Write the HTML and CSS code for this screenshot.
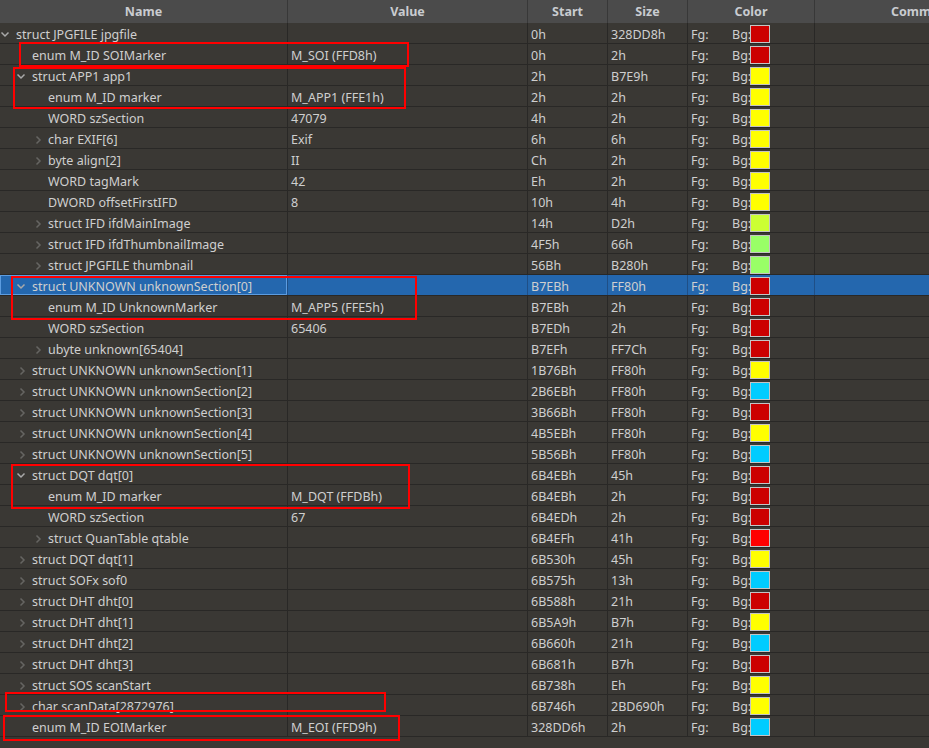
FILE: index.html
```html
<!DOCTYPE html>
<html>
<head>
<meta charset="utf-8">
<link rel="stylesheet" href="styles.css">
</head>
<body>
<div class="tree">
  <div class="hdr">
    <div class="h name">Name</div><div class="h val">Value</div><div class="h start">Start</div><div class="h size">Size</div><div class="h color">Color</div><div class="h cmt">Comm</div>
  </div>

  <div class="row"><div class="c name l0"><span class="tw open"><svg viewBox="0 0 10 10"><path d="M1.5 3.5 L5 7 L8.5 3.5"/></svg></span>struct JPGFILE jpgfile</div><div class="c val"></div><div class="c start">0h</div><div class="c size">328DD8h</div><div class="c color"><span class="fg">Fg:</span><span class="bg">Bg:</span><i class="sw red"></i></div><div class="c cmt"></div></div>
  <div class="row"><div class="c name l1"><span class="tw"></span>enum M_ID SOIMarker</div><div class="c val">M_SOI (FFD8h)</div><div class="c start">0h</div><div class="c size">2h</div><div class="c color"><span class="fg">Fg:</span><span class="bg">Bg:</span><i class="sw red"></i></div><div class="c cmt"></div></div>
  <div class="row"><div class="c name l1"><span class="tw open"><svg viewBox="0 0 10 10"><path d="M1.5 3.5 L5 7 L8.5 3.5"/></svg></span>struct APP1 app1</div><div class="c val"></div><div class="c start">2h</div><div class="c size">B7E9h</div><div class="c color"><span class="fg">Fg:</span><span class="bg">Bg:</span><i class="sw yel"></i></div><div class="c cmt"></div></div>
  <div class="row"><div class="c name l2"><span class="tw"></span>enum M_ID marker</div><div class="c val">M_APP1 (FFE1h)</div><div class="c start">2h</div><div class="c size">2h</div><div class="c color"><span class="fg">Fg:</span><span class="bg">Bg:</span><i class="sw yel"></i></div><div class="c cmt"></div></div>
  <div class="row"><div class="c name l2"><span class="tw"></span>WORD szSection</div><div class="c val">47079</div><div class="c start">4h</div><div class="c size">2h</div><div class="c color"><span class="fg">Fg:</span><span class="bg">Bg:</span><i class="sw yel"></i></div><div class="c cmt"></div></div>
  <div class="row"><div class="c name l2"><span class="tw shut"><svg viewBox="0 0 10 10"><path d="M3.5 1.5 L7 5 L3.5 8.5"/></svg></span>char EXIF[6]</div><div class="c val">Exif</div><div class="c start">6h</div><div class="c size">6h</div><div class="c color"><span class="fg">Fg:</span><span class="bg">Bg:</span><i class="sw yel"></i></div><div class="c cmt"></div></div>
  <div class="row"><div class="c name l2"><span class="tw shut"><svg viewBox="0 0 10 10"><path d="M3.5 1.5 L7 5 L3.5 8.5"/></svg></span>byte align[2]</div><div class="c val">II</div><div class="c start">Ch</div><div class="c size">2h</div><div class="c color"><span class="fg">Fg:</span><span class="bg">Bg:</span><i class="sw yel"></i></div><div class="c cmt"></div></div>
  <div class="row"><div class="c name l2"><span class="tw"></span>WORD tagMark</div><div class="c val">42</div><div class="c start">Eh</div><div class="c size">2h</div><div class="c color"><span class="fg">Fg:</span><span class="bg">Bg:</span><i class="sw yel"></i></div><div class="c cmt"></div></div>
  <div class="row"><div class="c name l2"><span class="tw"></span>DWORD offsetFirstIFD</div><div class="c val">8</div><div class="c start">10h</div><div class="c size">4h</div><div class="c color"><span class="fg">Fg:</span><span class="bg">Bg:</span><i class="sw yel"></i></div><div class="c cmt"></div></div>
  <div class="row"><div class="c name l2"><span class="tw shut"><svg viewBox="0 0 10 10"><path d="M3.5 1.5 L7 5 L3.5 8.5"/></svg></span>struct IFD ifdMainImage</div><div class="c val"></div><div class="c start">14h</div><div class="c size">D2h</div><div class="c color"><span class="fg">Fg:</span><span class="bg">Bg:</span><i class="sw lime"></i></div><div class="c cmt"></div></div>
  <div class="row"><div class="c name l2"><span class="tw shut"><svg viewBox="0 0 10 10"><path d="M3.5 1.5 L7 5 L3.5 8.5"/></svg></span>struct IFD ifdThumbnailImage</div><div class="c val"></div><div class="c start">4F5h</div><div class="c size">66h</div><div class="c color"><span class="fg">Fg:</span><span class="bg">Bg:</span><i class="sw grn"></i></div><div class="c cmt"></div></div>
  <div class="row"><div class="c name l2"><span class="tw shut"><svg viewBox="0 0 10 10"><path d="M3.5 1.5 L7 5 L3.5 8.5"/></svg></span>struct JPGFILE thumbnail</div><div class="c val"></div><div class="c start">56Bh</div><div class="c size">B280h</div><div class="c color"><span class="fg">Fg:</span><span class="bg">Bg:</span><i class="sw grn"></i></div><div class="c cmt"></div></div>
  <div class="row sel"><div class="c name l1 focus"><span class="tw open"><svg viewBox="0 0 10 10"><path d="M1.5 3.5 L5 7 L8.5 3.5"/></svg></span>struct UNKNOWN unknownSection[0]</div><div class="c val"></div><div class="c start">B7EBh</div><div class="c size">FF80h</div><div class="c color"><span class="fg">Fg:</span><span class="bg">Bg:</span><i class="sw red"></i></div><div class="c cmt"></div></div>
  <div class="row"><div class="c name l2"><span class="tw"></span>enum M_ID UnknownMarker</div><div class="c val">M_APP5 (FFE5h)</div><div class="c start">B7EBh</div><div class="c size">2h</div><div class="c color"><span class="fg">Fg:</span><span class="bg">Bg:</span><i class="sw red"></i></div><div class="c cmt"></div></div>
  <div class="row"><div class="c name l2"><span class="tw"></span>WORD szSection</div><div class="c val">65406</div><div class="c start">B7EDh</div><div class="c size">2h</div><div class="c color"><span class="fg">Fg:</span><span class="bg">Bg:</span><i class="sw red"></i></div><div class="c cmt"></div></div>
  <div class="row"><div class="c name l2"><span class="tw shut"><svg viewBox="0 0 10 10"><path d="M3.5 1.5 L7 5 L3.5 8.5"/></svg></span>ubyte unknown[65404]</div><div class="c val"></div><div class="c start">B7EFh</div><div class="c size">FF7Ch</div><div class="c color"><span class="fg">Fg:</span><span class="bg">Bg:</span><i class="sw red"></i></div><div class="c cmt"></div></div>
  <div class="row"><div class="c name l1"><span class="tw shut"><svg viewBox="0 0 10 10"><path d="M3.5 1.5 L7 5 L3.5 8.5"/></svg></span>struct UNKNOWN unknownSection[1]</div><div class="c val"></div><div class="c start">1B76Bh</div><div class="c size">FF80h</div><div class="c color"><span class="fg">Fg:</span><span class="bg">Bg:</span><i class="sw yel"></i></div><div class="c cmt"></div></div>
  <div class="row"><div class="c name l1"><span class="tw shut"><svg viewBox="0 0 10 10"><path d="M3.5 1.5 L7 5 L3.5 8.5"/></svg></span>struct UNKNOWN unknownSection[2]</div><div class="c val"></div><div class="c start">2B6EBh</div><div class="c size">FF80h</div><div class="c color"><span class="fg">Fg:</span><span class="bg">Bg:</span><i class="sw cyan"></i></div><div class="c cmt"></div></div>
  <div class="row"><div class="c name l1"><span class="tw shut"><svg viewBox="0 0 10 10"><path d="M3.5 1.5 L7 5 L3.5 8.5"/></svg></span>struct UNKNOWN unknownSection[3]</div><div class="c val"></div><div class="c start">3B66Bh</div><div class="c size">FF80h</div><div class="c color"><span class="fg">Fg:</span><span class="bg">Bg:</span><i class="sw red"></i></div><div class="c cmt"></div></div>
  <div class="row"><div class="c name l1"><span class="tw shut"><svg viewBox="0 0 10 10"><path d="M3.5 1.5 L7 5 L3.5 8.5"/></svg></span>struct UNKNOWN unknownSection[4]</div><div class="c val"></div><div class="c start">4B5EBh</div><div class="c size">FF80h</div><div class="c color"><span class="fg">Fg:</span><span class="bg">Bg:</span><i class="sw yel"></i></div><div class="c cmt"></div></div>
  <div class="row"><div class="c name l1"><span class="tw shut"><svg viewBox="0 0 10 10"><path d="M3.5 1.5 L7 5 L3.5 8.5"/></svg></span>struct UNKNOWN unknownSection[5]</div><div class="c val"></div><div class="c start">5B56Bh</div><div class="c size">FF80h</div><div class="c color"><span class="fg">Fg:</span><span class="bg">Bg:</span><i class="sw cyan"></i></div><div class="c cmt"></div></div>
  <div class="row"><div class="c name l1"><span class="tw open"><svg viewBox="0 0 10 10"><path d="M1.5 3.5 L5 7 L8.5 3.5"/></svg></span>struct DQT dqt[0]</div><div class="c val"></div><div class="c start">6B4EBh</div><div class="c size">45h</div><div class="c color"><span class="fg">Fg:</span><span class="bg">Bg:</span><i class="sw red"></i></div><div class="c cmt"></div></div>
  <div class="row"><div class="c name l2"><span class="tw"></span>enum M_ID marker</div><div class="c val">M_DQT (FFDBh)</div><div class="c start">6B4EBh</div><div class="c size">2h</div><div class="c color"><span class="fg">Fg:</span><span class="bg">Bg:</span><i class="sw red"></i></div><div class="c cmt"></div></div>
  <div class="row"><div class="c name l2"><span class="tw"></span>WORD szSection</div><div class="c val">67</div><div class="c start">6B4EDh</div><div class="c size">2h</div><div class="c color"><span class="fg">Fg:</span><span class="bg">Bg:</span><i class="sw red"></i></div><div class="c cmt"></div></div>
  <div class="row"><div class="c name l2"><span class="tw shut"><svg viewBox="0 0 10 10"><path d="M3.5 1.5 L7 5 L3.5 8.5"/></svg></span>struct QuanTable qtable</div><div class="c val"></div><div class="c start">6B4EFh</div><div class="c size">41h</div><div class="c color"><span class="fg">Fg:</span><span class="bg">Bg:</span><i class="sw bred"></i></div><div class="c cmt"></div></div>
  <div class="row"><div class="c name l1"><span class="tw shut"><svg viewBox="0 0 10 10"><path d="M3.5 1.5 L7 5 L3.5 8.5"/></svg></span>struct DQT dqt[1]</div><div class="c val"></div><div class="c start">6B530h</div><div class="c size">45h</div><div class="c color"><span class="fg">Fg:</span><span class="bg">Bg:</span><i class="sw yel"></i></div><div class="c cmt"></div></div>
  <div class="row"><div class="c name l1"><span class="tw shut"><svg viewBox="0 0 10 10"><path d="M3.5 1.5 L7 5 L3.5 8.5"/></svg></span>struct SOFx sof0</div><div class="c val"></div><div class="c start">6B575h</div><div class="c size">13h</div><div class="c color"><span class="fg">Fg:</span><span class="bg">Bg:</span><i class="sw cyan"></i></div><div class="c cmt"></div></div>
  <div class="row"><div class="c name l1"><span class="tw shut"><svg viewBox="0 0 10 10"><path d="M3.5 1.5 L7 5 L3.5 8.5"/></svg></span>struct DHT dht[0]</div><div class="c val"></div><div class="c start">6B588h</div><div class="c size">21h</div><div class="c color"><span class="fg">Fg:</span><span class="bg">Bg:</span><i class="sw red"></i></div><div class="c cmt"></div></div>
  <div class="row"><div class="c name l1"><span class="tw shut"><svg viewBox="0 0 10 10"><path d="M3.5 1.5 L7 5 L3.5 8.5"/></svg></span>struct DHT dht[1]</div><div class="c val"></div><div class="c start">6B5A9h</div><div class="c size">B7h</div><div class="c color"><span class="fg">Fg:</span><span class="bg">Bg:</span><i class="sw yel"></i></div><div class="c cmt"></div></div>
  <div class="row"><div class="c name l1"><span class="tw shut"><svg viewBox="0 0 10 10"><path d="M3.5 1.5 L7 5 L3.5 8.5"/></svg></span>struct DHT dht[2]</div><div class="c val"></div><div class="c start">6B660h</div><div class="c size">21h</div><div class="c color"><span class="fg">Fg:</span><span class="bg">Bg:</span><i class="sw cyan"></i></div><div class="c cmt"></div></div>
  <div class="row"><div class="c name l1"><span class="tw shut"><svg viewBox="0 0 10 10"><path d="M3.5 1.5 L7 5 L3.5 8.5"/></svg></span>struct DHT dht[3]</div><div class="c val"></div><div class="c start">6B681h</div><div class="c size">B7h</div><div class="c color"><span class="fg">Fg:</span><span class="bg">Bg:</span><i class="sw red"></i></div><div class="c cmt"></div></div>
  <div class="row"><div class="c name l1"><span class="tw shut"><svg viewBox="0 0 10 10"><path d="M3.5 1.5 L7 5 L3.5 8.5"/></svg></span>struct SOS scanStart</div><div class="c val"></div><div class="c start">6B738h</div><div class="c size">Eh</div><div class="c color"><span class="fg">Fg:</span><span class="bg">Bg:</span><i class="sw yel"></i></div><div class="c cmt"></div></div>
  <div class="row"><div class="c name l1"><span class="tw shut"><svg viewBox="0 0 10 10"><path d="M3.5 1.5 L7 5 L3.5 8.5"/></svg></span>char scanData[2872976]</div><div class="c val"></div><div class="c start">6B746h</div><div class="c size">2BD690h</div><div class="c color"><span class="fg">Fg:</span><span class="bg">Bg:</span><i class="sw yel"></i></div><div class="c cmt"></div></div>
  <div class="row"><div class="c name l1"><span class="tw"></span>enum M_ID EOIMarker</div><div class="c val">M_EOI (FFD9h)</div><div class="c start">328DD6h</div><div class="c size">2h</div><div class="c color"><span class="fg">Fg:</span><span class="bg">Bg:</span><i class="sw cyan"></i></div><div class="c cmt"></div></div>

  <div class="mark m1"></div>
  <div class="mark m2"></div>
  <div class="mark m3"></div>
  <div class="mark m4"></div>
  <div class="mark m5"></div>
  <div class="mark m6"></div>
</div>
</body>
</html>
```

FILE: styles.css
```css
html, body {
  margin: 0;
  padding: 0;
  background: #3a3834;
}
body {
  width: 929px;
  height: 748px;
  overflow: hidden;
  font-family: "Noto Sans", "Open Sans", sans-serif;
  font-size: 12.5px;
  color: #cfcfcf;
}
.tree {
  position: relative;
  width: 929px;
  height: 748px;
  background: #3a3834;
}
.hdr {
  display: flex;
  height: 23px;
  background: #4b4b4b;
}
.h {
  flex: none;
  box-sizing: border-box;
  border-right: 1px solid #383838;
  font-weight: bold;
  color: #c9ccd0;
  text-align: center;
  line-height: 23px;
  white-space: nowrap;
  overflow: hidden;
}
.row {
  display: flex;
  height: 21px;
  box-sizing: border-box;
  border-bottom: 1px solid #292826;
}
.c {
  flex: none;
  box-sizing: border-box;
  height: 20px;
  border-right: 1px solid #292826;
  line-height: 17px;
  padding-top: 3px;
  padding-left: 3px;
  white-space: nowrap;
  overflow: hidden;
  display: flex;
  align-items: center;
}
.name { width: 288px; }
.val { width: 240px; }
.start { width: 80px; }
.size { width: 80px; }
.color { width: 127px; }
.cmt { flex: 1 1 auto; min-width: 0; border-right: none; }
.h.cmt { flex: 1 1 auto; min-width: 0; text-align: left; padding-left: 76px; border-right: none; }

.c.name { padding-left: 0; }
.c.name.l1 { padding-left: 16px; }
.c.name.l2 { padding-left: 32px; }
.tw {
  width: 16px;
  height: 17px;
  flex: none;
  display: flex;
  align-items: center;
}
.tw svg {
  width: 10px;
  height: 10px;
  fill: none;
  stroke-width: 1.5;
}
.tw.open svg { stroke: #a9a9a9; margin-top: -2px; }
.tw.shut svg { stroke: #666562; margin-left: 1px; }

.fg { width: 41px; }
.bg { width: 18px; }
.sw {
  display: block;
  align-self: flex-start;
  margin-top: -1px;
  width: 20px;
  height: 18px;
  box-sizing: border-box;
  border: 1px solid #c4c4c4;
}
.sw.red { background: #cc0000; }
.sw.bred { background: #ff0000; }
.sw.yel { background: #ffff00; }
.sw.cyan { background: #00ccff; }
.sw.lime { background: #ccff33; }
.sw.grn { background: #99ff66; }

.row.sel { background: #2467ae; }
.row.sel .c { border-right-color: #1f4f86; }
.row.sel .c.focus { box-shadow: inset 0 0 0 1px #5c9ce0; }

.mark {
  position: absolute;
  border: 2px solid #ff0000;
  box-sizing: border-box;
}
.m1 { left: 19px; top: 42px; width: 390px; height: 25px; }
.m2 { left: 13px; top: 67px; width: 393px; height: 42px; }
.m3 { left: 11px; top: 276px; width: 406px; height: 44px; }
.m4 { left: 11px; top: 464px; width: 399px; height: 45px; }
.m5 { left: 5px; top: 692px; width: 381px; height: 20px; }
.m6 { left: 3px; top: 715px; width: 397px; height: 26px; }
```
